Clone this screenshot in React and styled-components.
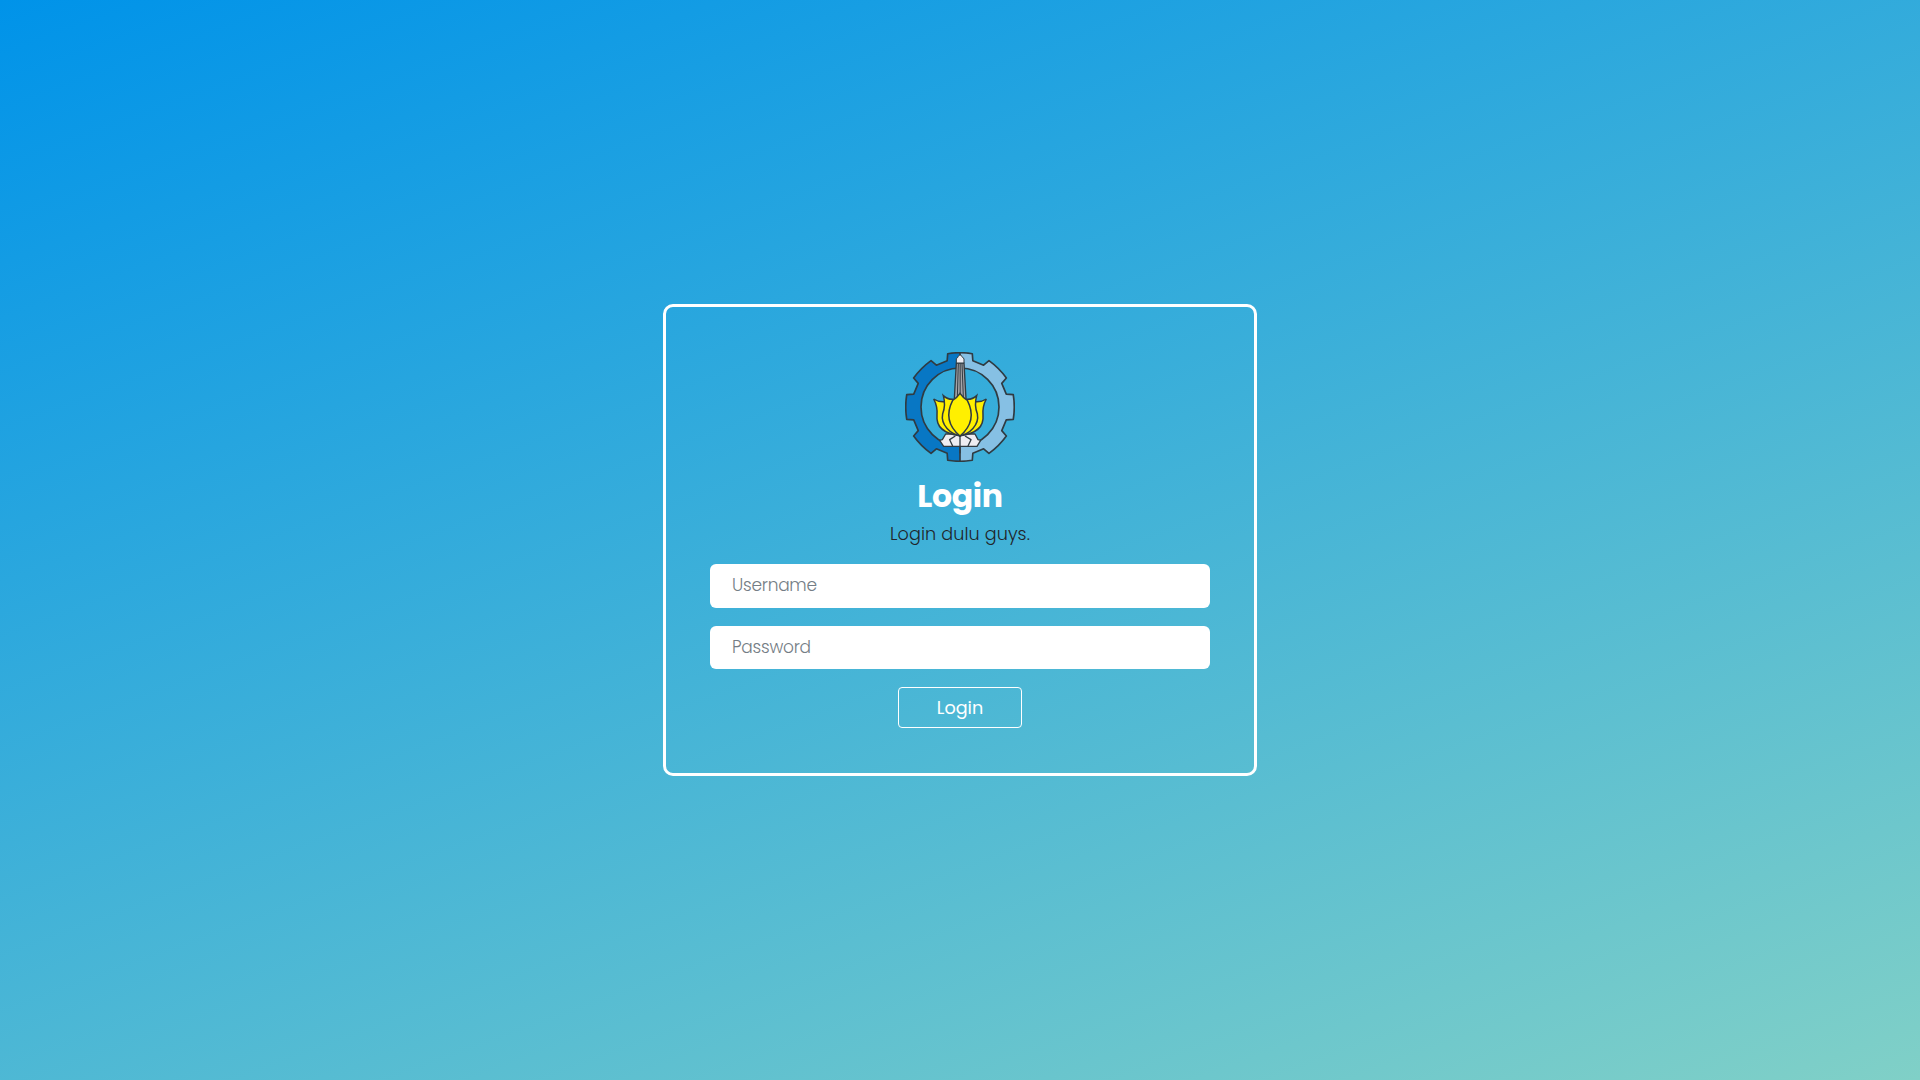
import React from "react";
import styled, { createGlobalStyle } from "styled-components";

const GlobalStyle = createGlobalStyle`
  *, *::before, *::after { box-sizing: border-box; }
  body {
    margin: 0;
    font-family: Poppins, Inter, "Open Sans", sans-serif;
    color: #212529;
  }
`;

const Page = styled.main`
  display: flex;
  align-items: center;
  justify-content: center;
  min-height: 100vh;
  background: linear-gradient(160deg, #0093e9 0%, #80d0c7 100%);
`;

const Card = styled.form`
  display: flex;
  flex-direction: column;
  align-items: center;
  width: 594px;
  height: 472px;
  padding: 45px 44px;
  border: 3px solid #fff;
  border-radius: 10px;
`;

const Logo = styled.svg`
  display: block;
  width: 110px;
  height: 110px;
`;

const Title = styled.h1`
  margin: 15px 0 0;
  font-size: 31.5px;
  font-weight: 700;
  line-height: 38px;
  letter-spacing: -0.3px;
  color: #fff;
`;

const Subtitle = styled.p`
  margin: 6px 0 17px;
  font-size: 17.6px;
  font-weight: 300;
  line-height: 26px;
  letter-spacing: 0.1px;
`;

const Field = styled.input`
  width: 500px;
  height: ${(p) => p.$height}px;
  margin: 0 0 18px;
  padding: 0 22px ${(p) => p.$height - 42}px;
  border: 0;
  border-radius: 6px;
  outline: 0;
  background: #fff;
  font-family: inherit;
  font-size: 17px;
  font-weight: 300;
  letter-spacing: -0.25px;
  color: #212529;

  &::placeholder {
    color: #747d85;
    opacity: 1;
  }
`;

const SubmitButton = styled.button`
  width: 124px;
  height: 41px;
  padding: 2px 0 0;
  border: 1px solid #fff;
  border-radius: 4px;
  background: transparent;
  font-family: inherit;
  font-size: 17.6px;
  font-weight: 400;
  line-height: 37px;
  color: #fff;
`;

const CENTER = 195;

const point = (radius, degrees) => {
  const a = (degrees * Math.PI) / 180;
  return `${(CENTER + radius * Math.sin(a)).toFixed(1)} ${(CENTER - radius * Math.cos(a)).toFixed(1)}`;
};

const gearOutline = () => {
  let d = `M${point(144, -15.5)}`;
  for (let i = 0; i < 8; i += 1) {
    const a = i * 45;
    d += `L${point(164, a - 13)}A230 230 0 0 1 ${point(164, a + 13)}`;
    d += `L${point(144, a + 15.5)}L${point(144, a + 29.5)}`;
  }
  return `${d}Z`;
};

const RING_HOLE = "M195 78a117 117 0 1 0 0 234a117 117 0 1 0 0 -234Z";

function Emblem() {
  const gear = gearOutline() + RING_HOLE;
  return (
    <Logo viewBox="30 30 330 330" role="img" aria-label="Logo">
      <defs>
        <clipPath id="leftHalf"><rect x="20" y="20" width="175" height="350" /></clipPath>
        <clipPath id="rightHalf"><rect x="195" y="20" width="175" height="350" /></clipPath>
      </defs>
      <path d={gear} fill="#0877c4" fillRule="evenodd" clipPath="url(#leftHalf)" />
      <path d={gear} fill="#86c0e4" fillRule="evenodd" clipPath="url(#rightHalf)" />
      <g stroke="#303b42" strokeWidth="5" strokeLinejoin="round">
        <path d={gear} fill="none" />
        <path d="M195 32V78M195 312V358" />
        <path d="M184 63H207L213 170H178Z" fill="#a5a4a8" strokeWidth="4" />
        <path d="M190 65L187 165M195.500 65V165M201 65L205 165" fill="none" strokeWidth="3" />
        <path d="M184 63V50Q188 48 190 43L195 38L201 43Q203 48 207 50V63Z" fill="#eeedf2" strokeWidth="3" />
        <path d="M152 276L142 293L134 295L146 313H246L257 295L249 293L240 276Z" fill="#eeedf2" strokeWidth="4" />
        <path d="M181 282L164 293L173 312M210 282L228 293L219 312M195 280V334" fill="none" strokeWidth="4" />
      </g>
      <g fill="#fff000" stroke="#303b42" strokeWidth="4.500" strokeLinejoin="miter">
        <path d="M116 171Q131 181 150 179L195 281C155 276 122 261 126 219Q128 193 116 171Z" />
        <path d="M274 171Q259 181 240 179L195 281C235 276 268 261 264 219Q262 193 274 171Z" />
        <path d="M145 161Q158 173 174 172L195 281C168 276 136 250 143 215Q153 190 145 161Z" />
        <path d="M245 161Q232 173 216 172L195 281C222 276 254 250 247 215Q237 190 245 161Z" />
        <path d="M195 154Q187 166 173 175C153 214 156 249 195 282C234 249 237 214 217 175Q203 166 195 154Z" />
      </g>
    </Logo>
  );
}

export default function App() {
  return (
    <>
      <GlobalStyle />
      <Page>
        <Card onSubmit={(e) => e.preventDefault()}>
          <Emblem />
          <Title>Login</Title>
          <Subtitle>Login dulu guys.</Subtitle>
          <Field $height={44} type="text" placeholder="Username" />
          <Field $height={43} type="password" placeholder="Password" />
          <SubmitButton type="submit">Login</SubmitButton>
        </Card>
      </Page>
    </>
  );
}
